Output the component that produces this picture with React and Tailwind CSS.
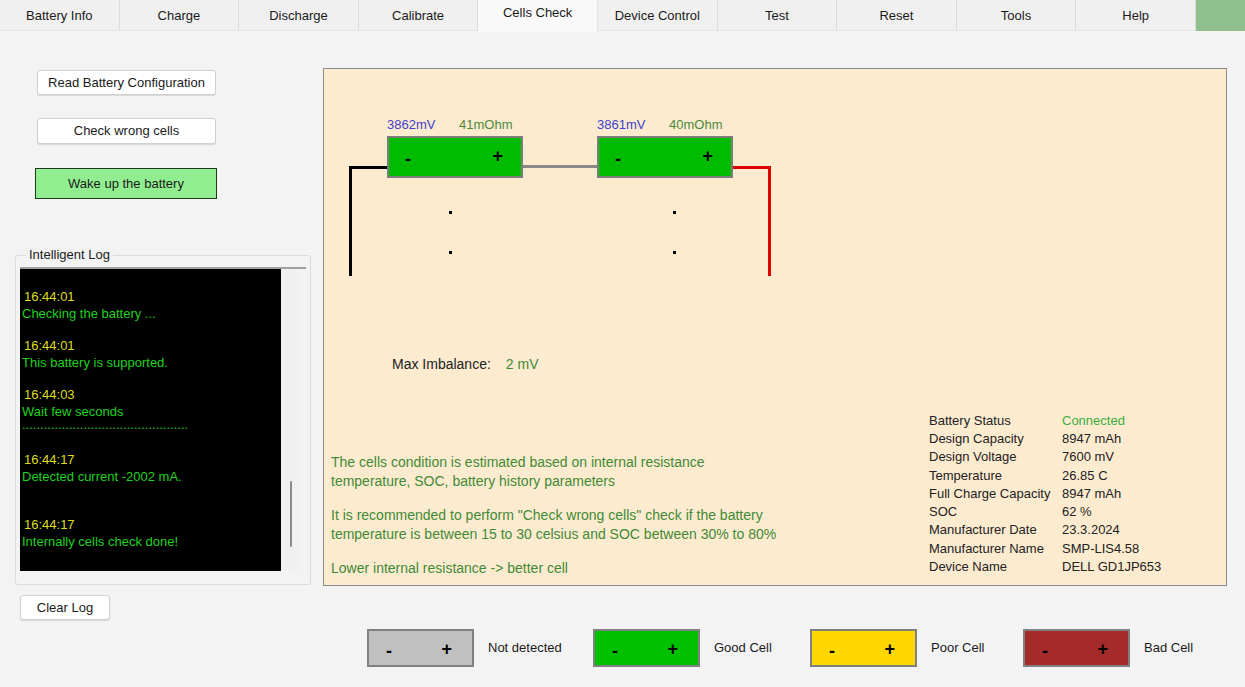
import React from "react"

const tabs = ["Battery Info", "Charge", "Discharge", "Calibrate", "Cells Check", "Device Control", "Test", "Reset", "Tools", "Help"]

const logs = [
    { time: "16:44:01", msg: "Checking the battery ..." },
    { time: "16:44:01", msg: "This battery is supported." },
    { time: "16:44:03", msg: "Wait few seconds", dots: true },
    { time: "16:44:17", msg: "Detected current -2002 mA.", extra: true },
    { time: "16:44:17", msg: "Internally cells check done!" },
]

const info = [
    ["Battery Status", "Connected"],
    ["Design Capacity", "8947 mAh"],
    ["Design Voltage", "7600 mV"],
    ["Temperature", "26.85 C"],
    ["Full Charge Capacity", "8947 mAh"],
    ["SOC", "62 %"],
    ["Manufacturer Date", "23.3.2024"],
    ["Manufacturer Name", "SMP-LIS4.58"],
    ["Device Name", "DELL GD1JP653"],
]

const legend = [
    { label: "Not detected", bg: "bg-[#c0c0c0]", w: "w-[226px]" },
    { label: "Good Cell", bg: "bg-[#00c000]", w: "w-[217px]" },
    { label: "Poor Cell", bg: "bg-[#ffd700]", w: "w-[213px]" },
    { label: "Bad Cell", bg: "bg-[#a52a2a]", w: "w-[200px]" },
]

const Cell = ({ left, mv, ohm }) => (
    <>
        <div className="absolute top-[49px] text-[13px] leading-[14px] text-[#3f3fcf]" style={{ left }}>{mv}</div>
        <div className="absolute top-[49px] text-[13px] leading-[14px] text-[#4a8a3a]" style={{ left: left + 72 }}>{ohm}</div>
        <div className="absolute top-[67px] w-[136px] h-[42px] border-2 border-[#7d7d7d] bg-[#00bb00] flex items-center justify-between pl-[16px] pr-[18px] text-black font-bold text-[18px]" style={{ left }}>
            <span className="mt-[4px]">-</span>
            <span className="-mt-[2px]">+</span>
        </div>
    </>
)

const App = () => {
    return (
        <div className="w-[1245px] h-[687px] bg-[#f3f3f3] overflow-hidden text-[#1a1a1a]" style={{ fontFamily: '"Liberation Sans", Arial, sans-serif' }}>
            {/* tab strip */}
            <div className="flex h-[31px] bg-[#f0f0f0] text-[13px]">
                {tabs.map((t) => (
                    <div key={t} className={t === "Cells Check"
                        ? "w-[119.6px] h-[32px] bg-[#f9f9f9] flex justify-center pt-[3px] border-r border-[#e3e3e3]"
                        : "w-[119.6px] h-[31px] flex justify-center pt-[6px] border-r border-[#dcdcdc] border-b border-b-[#e6e6e6]"}>
                        {t}
                    </div>
                ))}
                <div className="flex-1 bg-[#8fbf8c]" />
            </div>

            <div className="flex pt-[37px]">
                {/* left column */}
                <div className="w-[323px] shrink-0 flex flex-col text-[13px]">
                    <button className="ml-[37px] mt-[2px] w-[179px] h-[25px] bg-white border border-[#d0d0d0] rounded-[3px] shadow-[0_1px_1px_rgba(0,0,0,0.12)]">Read Battery Configuration</button>
                    <button className="ml-[37px] mt-[23px] w-[179px] h-[26px] bg-white border border-[#d0d0d0] rounded-[3px] shadow-[0_1px_1px_rgba(0,0,0,0.12)]">Check wrong cells</button>
                    <button className="ml-[35px] mt-[24px] w-[182px] h-[31px] bg-[#90ee90] border border-[#1e3a1e]">Wake up the battery</button>

                    <fieldset className="ml-[15px] mt-[47px] w-[296px] h-[339px] border border-[#dcdcdc] rounded-[3px] px-[4px] pb-[10px]">
                        <legend className="ml-[6px] px-[3px] text-[13px] leading-[18px]">Intelligent Log</legend>
                        <div className="flex h-[304px] mt-[3px] border-t-2 border-[#a0a0a0]">
                            <div className="w-[261px] bg-black pt-[19px] text-[13px] leading-[17px]">
                                {logs.map((l, i) => (
                                    <div key={i} className={l.extra ? "mb-[31px]" : l.dots ? "mb-[19px]" : "mb-[15px]"}>
                                        <div className="pl-[4px] text-[#dede1e]">{l.time}</div>
                                        <div className="pl-[2px] text-[#1ed21e]">{l.msg}</div>
                                        {l.dots && <div className="pl-[2px] text-[#1ed21e] leading-[14px] -mt-[2px]">..............................................</div>}
                                    </div>
                                ))}
                            </div>
                            <div className="w-[19px] bg-[#f0f0f0] flex justify-center">
                                <div className="w-[2px] h-[66px] mt-[212px] bg-[#8a8a8a] rounded" />
                            </div>
                        </div>
                    </fieldset>

                    <button className="ml-[20px] mt-[10px] w-[90px] h-[25px] bg-white border border-[#d0d0d0] rounded-[3px] shadow-[0_1px_1px_rgba(0,0,0,0.12)]">Clear Log</button>
                </div>

                {/* right column */}
                <div className="flex flex-col">
                    <div className="w-[904px] h-[518px] bg-[#fdebd0] border border-[#8c8c8c] flex flex-col">
                        <div className="relative h-[220px]">
                            <Cell left={63} mv="3862mV" ohm="41mOhm" />
                            <Cell left={273} mv="3861mV" ohm="40mOhm" />
                            {/* wires */}
                            <div className="absolute left-[25px] top-[97px] w-[38px] h-[3px] bg-black" />
                            <div className="absolute left-[25px] top-[97px] w-[3px] h-[110px] bg-black" />
                            <div className="absolute left-[199px] top-[96px] w-[74px] h-[3px] bg-[#8a8a8a]" />
                            <div className="absolute left-[409px] top-[97px] w-[38px] h-[3px] bg-[#e00000]" />
                            <div className="absolute left-[444px] top-[97px] w-[3px] h-[110px] bg-[#e00000]" />
                            {/* dots */}
                            <div className="absolute left-[125px] top-[142px] w-[3px] h-[3px] bg-black" />
                            <div className="absolute left-[125px] top-[182px] w-[3px] h-[3px] bg-black" />
                            <div className="absolute left-[349px] top-[142px] w-[3px] h-[3px] bg-black" />
                            <div className="absolute left-[349px] top-[182px] w-[3px] h-[3px] bg-black" />
                        </div>

                        <div className="mt-[66px] pl-[68px] text-[14px] leading-[18px] flex">
                            <span className="text-[#222]">Max Imbalance:</span>
                            <span className="ml-[15px] text-[#3f8a35]">2 mV</span>
                        </div>

                        <div className="mt-auto flex justify-between items-end pb-[7px]">
                            <div className="pl-[7px] text-[14px] leading-[19.5px] text-[#3f8a35] flex flex-col gap-[14px]">
                                <p>The cells condition is estimated based on internal resistance<br />temperature, SOC, battery history parameters</p>
                                <p>It is recommended to perform "Check wrong cells" check if the battery<br />temperature is between 15 to 30 celsius and SOC between 30% to 80%</p>
                                <p>Lower internal resistance -&gt; better cell</p>
                            </div>
                            <div className="w-[297px] mb-[2px] text-[13px] leading-[18.25px] text-[#222]">
                                {info.map(([k, v]) => (
                                    <div key={k} className="flex">
                                        <span className="w-[133px]">{k}</span>
                                        <span className={k === "Battery Status" ? "text-[#3cae3c]" : ""}>{v}</span>
                                    </div>
                                ))}
                            </div>
                        </div>
                    </div>

                    {/* legend */}
                    <div className="flex items-center mt-[43px] pl-[44px] text-[13px]">
                        {legend.map((l) => (
                            <div key={l.label} className={`flex items-center shrink-0 ${l.w}`}>
                                <div className={`w-[107px] h-[38px] shrink-0 border-2 border-[#808080] ${l.bg} flex items-center justify-between pl-[17px] pr-[20px] font-bold text-[18px] text-black`}>
                                    <span className="mt-[6px]">-</span>
                                    <span className="mt-[2px]">+</span>
                                </div>
                                <span className="ml-[14px] whitespace-nowrap">{l.label}</span>
                            </div>
                        ))}
                    </div>
                </div>
            </div>
        </div>
    )
}

export default App
